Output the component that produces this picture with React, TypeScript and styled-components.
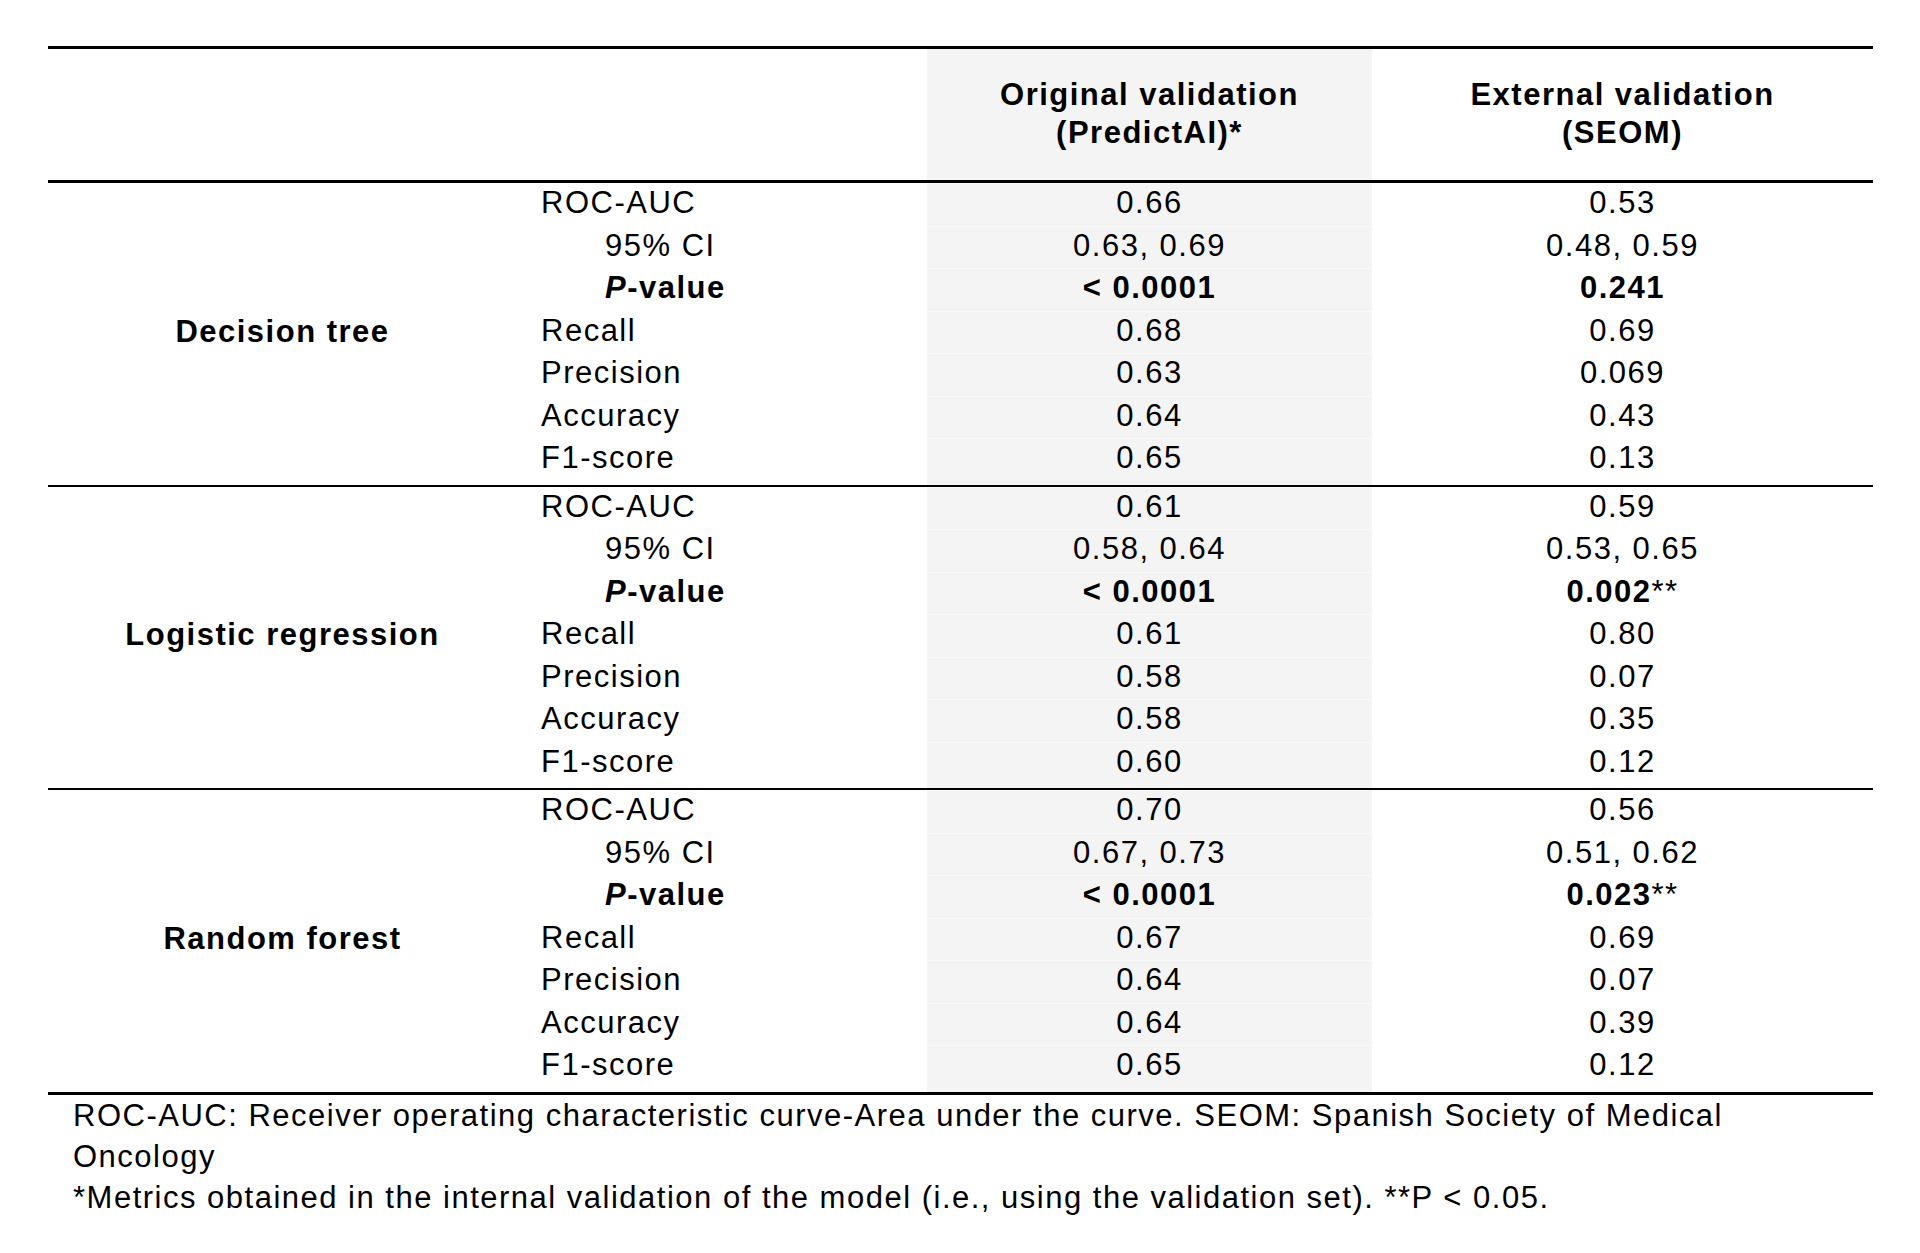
import React from 'react';
import styled, { createGlobalStyle } from 'styled-components';

const GlobalStyle = createGlobalStyle`
  html, body {
    margin: 0;
    padding: 0;
    background: #ffffff;
  }
  body {
    font-family: "Liberation Sans", Arial, sans-serif;
    color: #000000;
  }
`;

const LABEL_W = 469;
const COLS = '410px 445px 501px';
const SHADE = '#f4f4f4';

const Page = styled.div`
  padding: 46px 0 0 48px;
`;

const Table = styled.div`
  width: 1825px;
  font-size: 31px;
  letter-spacing: 1.5px;
`;

const Header = styled.div`
  display: grid;
  grid-template-columns: ${LABEL_W}px ${COLS};
  height: 131px;
  border-top: 3px solid #000;
  border-bottom: 3px solid #000;
`;

const HeadCell = styled.div<{ $shade?: boolean }>`
  display: flex;
  align-items: center;
  justify-content: center;
  text-align: center;
  font-weight: bold;
  line-height: 38px;
  padding-bottom: 2px;
  background: ${(p) => (p.$shade ? SHADE : 'transparent')};
`;

const Group = styled.div<{ $first?: boolean; $last?: boolean }>`
  display: grid;
  grid-template-columns: ${LABEL_W}px 1fr;
  border-top: ${(p) => (p.$first ? 'none' : '2px solid #000')};
  border-bottom: ${(p) => (p.$last ? '3px solid #000' : 'none')};
`;

const GroupName = styled.div`
  display: flex;
  align-items: center;
  justify-content: center;
  font-weight: bold;
  padding-bottom: 4px;
`;

const Rows = styled.div`
  display: flex;
  flex-direction: column;
  padding-bottom: 4px;
  background: linear-gradient(
    to right,
    transparent 410px,
    ${SHADE} 410px,
    ${SHADE} 855px,
    transparent 855px
  );
`;

const Row = styled.div`
  display: grid;
  grid-template-columns: ${COLS};
  height: 42.5px;
  line-height: 40px;
`;

const Metric = styled.div<{ $indent?: boolean; $bold?: boolean }>`
  padding-left: ${(p) => (p.$indent ? 88 : 24)}px;
  font-weight: ${(p) => (p.$bold ? 'bold' : 'normal')};
  white-space: nowrap;
`;

const Value = styled.div<{ $shade?: boolean; $bold?: boolean }>`
  text-align: center;
  white-space: nowrap;
  font-weight: ${(p) => (p.$bold ? 'bold' : 'normal')};
  box-shadow: ${(p) => (p.$shade ? 'inset 0 1px 0 #fafafa' : 'none')};
`;

const Stars = styled.span`
  font-weight: normal;
`;

const Notes = styled.div`
  padding: 0 24px 0 25px;
  font-size: 31px;
  letter-spacing: 1.5px;
  line-height: 41px;
  width: 1825px;
  box-sizing: border-box;
`;

const Note = styled.p`
  margin: 0;
`;

type Kind = 'main' | 'ci' | 'p';
type Line = [Kind, string, string, string];

const groups: { name: string; rows: Line[] }[] = [
  {
    name: 'Decision tree',
    rows: [
      ['main', 'ROC-AUC', '0.66', '0.53'],
      ['ci', '95% CI', '0.63, 0.69', '0.48, 0.59'],
      ['p', '-value', '< 0.0001', '0.241'],
      ['main', 'Recall', '0.68', '0.69'],
      ['main', 'Precision', '0.63', '0.069'],
      ['main', 'Accuracy', '0.64', '0.43'],
      ['main', 'F1-score', '0.65', '0.13'],
    ],
  },
  {
    name: 'Logistic regression',
    rows: [
      ['main', 'ROC-AUC', '0.61', '0.59'],
      ['ci', '95% CI', '0.58, 0.64', '0.53, 0.65'],
      ['p', '-value', '< 0.0001', '0.002**'],
      ['main', 'Recall', '0.61', '0.80'],
      ['main', 'Precision', '0.58', '0.07'],
      ['main', 'Accuracy', '0.58', '0.35'],
      ['main', 'F1-score', '0.60', '0.12'],
    ],
  },
  {
    name: 'Random forest',
    rows: [
      ['main', 'ROC-AUC', '0.70', '0.56'],
      ['ci', '95% CI', '0.67, 0.73', '0.51, 0.62'],
      ['p', '-value', '< 0.0001', '0.023**'],
      ['main', 'Recall', '0.67', '0.69'],
      ['main', 'Precision', '0.64', '0.07'],
      ['main', 'Accuracy', '0.64', '0.39'],
      ['main', 'F1-score', '0.65', '0.12'],
    ],
  },
];

function Cell({ text, bold, shade }: { text: string; bold: boolean; shade?: boolean }) {
  const starred = bold && text.endsWith('**');
  return (
    <Value $bold={bold} $shade={shade}>
      {starred ? text.slice(0, -2) : text}
      {starred && <Stars>**</Stars>}
    </Value>
  );
}

export default function App() {
  return (
    <>
      <GlobalStyle />
      <Page>
        <Table>
          <Header>
            <HeadCell />
            <HeadCell />
            <HeadCell $shade>
              Original validation
              <br />
              (PredictAI)*
            </HeadCell>
            <HeadCell>
              External validation
              <br />
              (SEOM)
            </HeadCell>
          </Header>

          {groups.map((g, gi) => (
            <Group key={g.name} $first={gi === 0} $last={gi === groups.length - 1}>
              <GroupName>{g.name}</GroupName>
              <Rows>
                {g.rows.map(([kind, label, orig, ext]) => (
                  <Row key={kind + label}>
                    <Metric $indent={kind !== 'main'} $bold={kind === 'p'}>
                      {kind === 'p' && <i>P</i>}
                      {label}
                    </Metric>
                    <Cell text={orig} bold={kind === 'p'} shade />
                    <Cell text={ext} bold={kind === 'p'} />
                  </Row>
                ))}
              </Rows>
            </Group>
          ))}
        </Table>

        <Notes>
          <Note>
            ROC-AUC: Receiver operating characteristic curve-Area under the curve. SEOM: Spanish Society of Medical
            Oncology
          </Note>
          <Note>*Metrics obtained in the internal validation of the model (i.e., using the validation set). **P &lt; 0.05.</Note>
        </Notes>
      </Page>
    </>
  );
}
